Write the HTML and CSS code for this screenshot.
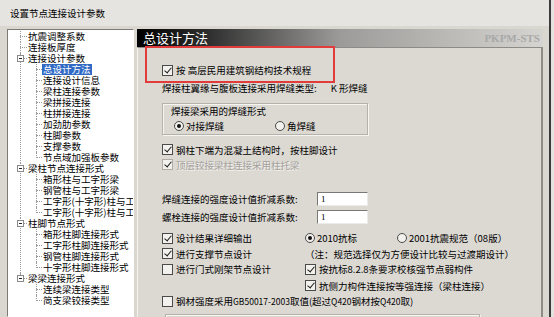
FILE: index.html
```html
<!DOCTYPE html>
<html lang="zh-CN">
    <head>
        <meta charset="utf-8" />
        <title>设置节点连接设计参数</title>
        <link rel="stylesheet" href="styles.css">
    </head>
    <body>
        <div class="dialog">
            <header class="titlebar">设置节点连接设计参数</header>
            <div class="content">
                <ul class="tree">
                    <li><div class="item">抗震调整系数</div></li>
                    <li><div class="item">连接板厚度</div></li>
                    <li>
                        <div class="item"><i class="toggle"></i>连接设计参数</div>
                        <ul class="sub">
                            <li><div class="item"><span class="sel">总设计方法</span></div></li>
                            <li><div class="item">连接设计信息</div></li>
                            <li><div class="item">梁柱连接参数</div></li>
                            <li><div class="item">梁拼接连接</div></li>
                            <li><div class="item">柱拼接连接</div></li>
                            <li><div class="item">加劲肋参数</div></li>
                            <li><div class="item">柱脚参数</div></li>
                            <li><div class="item">支撑参数</div></li>
                            <li><div class="item">节点域加强板参数</div></li>
                        </ul>
                    </li>
                    <li>
                        <div class="item"><i class="toggle"></i>梁柱节点连接形式</div>
                        <ul class="sub">
                            <li><div class="item">箱形柱与工字形梁</div></li>
                            <li><div class="item">钢管柱与工字形梁</div></li>
                            <li><div class="item">工字形(十字形)柱与工字形梁</div></li>
                            <li><div class="item">工字形(十字形)柱与工字形梁(弱轴)</div></li>
                        </ul>
                    </li>
                    <li>
                        <div class="item"><i class="toggle"></i>柱脚节点形式</div>
                        <ul class="sub">
                            <li><div class="item">箱形柱脚连接形式</div></li>
                            <li><div class="item">工字形柱脚连接形式</div></li>
                            <li><div class="item">钢管柱脚连接形式</div></li>
                            <li><div class="item">十字形柱脚连接形式</div></li>
                        </ul>
                    </li>
                    <li>
                        <div class="item"><i class="toggle"></i>梁梁连接形式</div>
                        <ul class="sub">
                            <li><div class="item">连续梁连接类型</div></li>
                            <li><div class="item">简支梁铰接类型</div></li>
                        </ul>
                    </li>
                </ul>

                <section class="panel">
                    <div class="panel-head">
                        <h2 class="panel-title">总设计方法</h2>
                        <span class="brand">PKPM-STS</span>
                    </div>
                    <div class="panel-body">
                        <div class="highlight"></div>

                        <div class="row r-code"><span class="cb on"></span>按 高层民用建筑钢结构技术规程</div>
                        <div class="row r-weld">焊接柱翼缘与腹板连接采用焊缝类型:<span class="value">K 形焊缝</span></div>

                        <div class="group">
                            <div class="group-title">焊接梁采用的焊缝形式</div>
                            <div class="radios">
                                <label class="opt wide"><span class="rb on"></span>对接焊缝</label>
                                <label class="opt"><span class="rb"></span>角焊缝</label>
                            </div>
                        </div>

                        <div class="row r-base"><span class="cb on"></span>钢柱下端为混凝土结构时，按柱脚设计</div>
                        <div class="row r-base disabled"><span class="cb on"></span>顶层铰接梁柱连接采用柱托梁</div>

                        <div class="row r-num first"><span class="num-label">焊缝连接的强度设计值折减系数:</span><span class="num">1</span></div>
                        <div class="row r-num"><span class="num-label">螺栓连接的强度设计值折减系数:</span><span class="num">1</span></div>

                        <div class="opts">
                            <div class="cell"><span class="cb on"></span>设计结果详细输出</div>
                            <div class="cell">
                                <label class="opt code"><span class="rb on"></span>2010抗标</label>
                                <label class="opt"><span class="rb"></span>2001抗震规范（08版）</label>
                            </div>
                            <div class="cell"><span class="cb on"></span>进行支撑节点设计</div>
                            <div class="cell">（注：规范选择仅为方便设计比较与过渡期设计）</div>
                            <div class="cell"><span class="cb"></span>进行门式刚架节点设计</div>
                            <div class="cell"><span class="cb on"></span>按抗标8.2.8条要求校核强节点弱构件</div>
                            <div class="cell"></div>
                            <div class="cell"><span class="cb on"></span>抗侧力构件连接按等强连接（梁柱连接）</div>
                            <div class="cell span"><span class="cb"></span>钢材强度采用<span class="latin">GB50017-2003</span>取值(超过<span class="latin">Q420</span>钢材按<span class="latin">Q420</span>取)</div>
                        </div>

                        <div class="group floors">
                            <div class="row"><span class="cb"></span>选择部分楼层自动连接设计</div>
                        </div>
                    </div>
                </section>
            </div>
        </div>
    </body>
</html>
```

FILE: styles.css
```css
* {
    margin: 0;
    padding: 0;
    box-sizing: border-box;
    list-style: none;
}

body {
    width: 554px;
    height: 317px;
    overflow: hidden;
    background: #e4e2de;
    font-family: "Noto Sans CJK SC", sans-serif;
    font-size: 9.5px;
    color: #000;
}

.dialog {
    width: 551px;
    height: 317px;
    background: #dad7d1;
    border-right: 2px solid #3a3a3a;
}

.titlebar {
    height: 26px;
    line-height: 26px;
    padding-left: 10px;
    background: #e6e4e0;
}

.content {
    display: flex;
    padding: 3px 0 0 7px;
    height: 291px;
}

/* tree */

.tree {
    width: 127px;
    height: 100%;
    padding-top: 1px;
    background: #fff;
    border: 1px solid;
    border-color: #7c7a76 #fff #fff #7c7a76;
    overflow: hidden;
    white-space: nowrap;
}

.tree li {
    position: relative;
}

.item {
    position: relative;
    height: 11px;
    line-height: 11px;
}

.tree > li::before,
.sub > li::before {
    content: '';
    position: absolute;
    top: 0;
    bottom: 0;
    left: 12px;
    border-left: 1px dotted #9a9a9a;
}

.sub > li::before {
    left: 28px;
}

.tree > li:last-child::before,
.sub > li:last-child::before {
    bottom: auto;
    height: 6px;
}

.item::before {
    content: '';
    position: absolute;
    top: 5px;
    left: 12px;
    width: 7px;
    border-top: 1px dotted #9a9a9a;
}

.tree > li > .item {
    padding-left: 20px;
}

.sub > li > .item {
    padding-left: 35px;
}

.sub > li > .item::before {
    left: 28px;
    width: 6px;
}

.toggle {
    position: absolute;
    left: 9px;
    top: 2px;
    width: 7px;
    height: 7px;
    border: 1px solid #8a8a8a;
    background: #fff;
    z-index: 1;
}

.toggle::after {
    content: '';
    position: absolute;
    left: 1px;
    right: 1px;
    top: 2px;
    height: 1px;
    background: #222;
}

.sel {
    display: inline-block;
    margin-left: -1px;
    padding: 0 1px;
    background: #316ac5;
    color: #fff;
}

/* right panel */

.panel {
    width: 406px;
    margin-left: 3px;
    display: flex;
    flex-direction: column;
}

.panel-head {
    height: 18px;
    display: flex;
    justify-content: space-between;
    align-items: center;
    padding: 0 3px 0 6px;
    background: linear-gradient(90deg, #000 0%, #303030 18%, #9c9b99 50%, #d6d4d0 100%);
}

.panel-title {
    font-size: 13px;
    font-weight: normal;
    line-height: 18px;
    color: #fff;
}

.brand {
    font-family: "Liberation Serif", serif;
    font-weight: bold;
    font-size: 11px;
    color: #a8a8a8;
}

.panel-body {
    flex: 1;
    position: relative;
    padding: 14px 0 0 24px;
    border-top: 1px solid #8e8b86;
    border-left: 1px solid #f4f3f0;
    border-right: 2px solid #8e8b86;
    background: #dcd9d3;
}

.highlight {
    position: absolute;
    left: 7px;
    top: -2px;
    width: 190px;
    height: 37px;
    border: 2px solid #e23b3b;
}

.row {
    display: flex;
    align-items: center;
    height: 16px;
    white-space: nowrap;
}

.r-weld {
    margin-top: 2px;
}

.value {
    margin-left: 14px;
}

.r-base {
    height: 15px;
    margin-top: 0;
}

.group + .r-base {
    margin-top: 7px;
}

.disabled {
    color: #a4a19c;
    text-shadow: 1px 1px 0 #f2f1ee;
}

.disabled .cb {
    border-color: #b0ada8;
}

.disabled .cb::after {
    border-color: #a8a5a0;
}

.r-num.first {
    margin-top: 19px;
}

.r-num {
    margin-top: 2px;
}

.num-label {
    width: 155px;
}

.num {
    width: 51px;
    height: 14px;
    line-height: 12px;
    padding-left: 3px;
    background: #fff;
    border: 1px solid;
    border-color: #7a7874 #ecebe8 #ecebe8 #7a7874;
    font-family: "Liberation Serif", serif;
    font-size: 9px;
}

/* group boxes */

.group {
    width: 206px;
    margin-top: 7px;
    padding-bottom: 1px;
    border: 1px solid #b5b2ac;
    box-shadow: inset 1px 1px 0 #f6f5f2, 1px 1px 0 #f6f5f2;
}

.group-title {
    display: inline-block;
    margin: -7px 0 0 6px;
    padding: 0 2px;
    line-height: 12px;
    background: #dcd9d3;
}

.radios {
    display: flex;
    height: 14px;
    margin-top: 1px;
    padding-left: 11px;
}

.opt {
    display: flex;
    align-items: center;
}

.opt.wide {
    width: 101px;
}

.opt.code {
    width: 92px;
}

/* checkbox and radio */

.cb {
    position: relative;
    flex: none;
    width: 11px;
    height: 11px;
    margin-right: 3px;
    border: 1px solid #4a4a4a;
    background: #f3f1ed;
}

.cb.on::after {
    content: '';
    position: absolute;
    left: 3px;
    top: 0;
    width: 3px;
    height: 6px;
    border: solid #1a1a1a;
    border-width: 0 1.5px 1.5px 0;
    transform: rotate(40deg);
}

.rb {
    position: relative;
    flex: none;
    width: 10px;
    height: 10px;
    margin-right: 2px;
    border: 1px solid #4a4a4a;
    border-radius: 50%;
    background: #f3f1ed;
}

.rb.on::after {
    content: '';
    position: absolute;
    left: 2px;
    top: 2px;
    width: 4px;
    height: 4px;
    border-radius: 50%;
    background: #111;
}

/* option grid */

.opts {
    display: grid;
    grid-template-columns: 143px auto;
    grid-template-rows: 16px 15px 16px 17px 14px;
    margin-top: 5px;
    white-space: nowrap;
}

.cell {
    display: flex;
    align-items: center;
}

.cell.span {
    grid-column: 1 / 3;
}

.latin {
    font-size: 8.5px;
}

.group.floors {
    width: 315px;
    height: 20px;
    margin: 6px 0 0 3px;
    padding: 0 0 0 4px;
}

.floors .row {
    margin-top: 1px;
}
```
